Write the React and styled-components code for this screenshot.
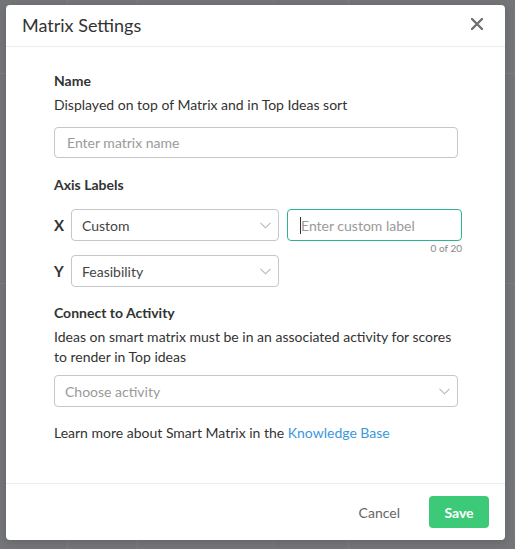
import React from "react";
import styled, { createGlobalStyle } from "styled-components";

const Global = createGlobalStyle`
  html, body { margin: 0; padding: 0; }
  body {
    background-color: #747579;
    background-image:
      linear-gradient(to right, transparent 67px, #7c7d81 67px, #7c7d81 68px, transparent 68px),
      linear-gradient(to right, transparent 137px, #7c7d81 137px, #7c7d81 138px, transparent 138px),
      linear-gradient(to right, transparent 278px, #6d7078 278px, #6d7078 279px, transparent 279px),
      linear-gradient(to right, transparent 348px, #7c7d81 348px, #7c7d81 349px, transparent 349px),
      linear-gradient(to bottom, transparent 73px, #7c7d81 73px, #7c7d81 74px, transparent 74px),
      linear-gradient(to bottom, transparent 283px, #7c7d81 283px, #7c7d81 284px, transparent 284px);
    font-family: Lato, "Noto Sans", sans-serif;
    color: #333;
  }
  * { box-sizing: border-box; }
`;

const Page = styled.div`
  width: 515px;
  height: 549px;
  padding: 5px 10px 9px 6px;
`;

const Modal = styled.div`
  width: 499px;
  height: 535px;
  background: #fff;
  border-radius: 4px;
  display: flex;
  flex-direction: column;
  box-shadow: 0 2px 8px rgba(0, 0, 0, 0.15);
`;

const Header = styled.div`
  height: 42px;
  display: flex;
  align-items: center;
  justify-content: space-between;
  padding: 0 20px 2px 16px;
  border-bottom: 1px solid #ececec;
`;

const Title = styled.h2`
  margin: 0;
  font-size: 18px;
  font-weight: 400;
  color: #333;
`;

const CloseButton = styled.button`
  border: none;
  background: none;
  padding: 0;
  width: 14px;
  height: 14px;
  display: flex;
  cursor: pointer;
`;

const Body = styled.div`
  flex: 1;
  padding: 24px 47px 0 48px;
  display: flex;
  flex-direction: column;
`;

const SectionTitle = styled.div`
  font-size: 14px;
  font-weight: 700;
  line-height: 20px;
  color: #333;
  margin-top: ${(p) => p.$top || 0}px;
`;

const Help = styled.p`
  margin: 4px 0 0;
  font-size: 14px;
  line-height: 20px;
  color: #333;
`;

const TextInput = styled.input`
  margin-top: 12px;
  width: 100%;
  height: 31px;
  border: 1px solid #c4c6c9;
  border-radius: 4px;
  padding: 0 12px;
  font-family: Lato, sans-serif;
  font-size: 14px;
  color: #333;
  outline: none;
  &::placeholder { color: #9a9a9a; }
`;

const AxisGrid = styled.div`
  margin-top: 14px;
  display: grid;
  grid-template-columns: 17px 208px 183px;
  grid-template-rows: 32px 14px 32px;
  column-gap: 0;
  align-items: center;
`;

const AxisLetter = styled.span`
  font-size: 15px;
  font-weight: 700;
  color: #333;
`;

const SelectBox = styled.div`
  position: relative;
  height: ${(p) => p.$h || 32}px;
  ${(p) => (p.$full ? "margin-top: 8px; width: 100%;" : "")}
  border: 1px solid #c4c6c9;
  border-radius: 4px;
  display: flex;
  align-items: center;
  justify-content: space-between;
  padding: 0 7px 0 10px;
  font-size: 14px;
  color: ${(p) => (p.$placeholder ? "#9a9a9a" : "#444")};
  background: #fff;
`;

const FocusField = styled.div`
  margin-left: 8px;
  height: 32px;
  border: 1px solid #2db394;
  border-radius: 4px;
  display: flex;
  align-items: center;
  padding: 0 12px;
`;

const Caret = styled.span`
  width: 1px;
  height: 17px;
  background: #333;
  flex: none;
`;

const BareInput = styled.input`
  border: none;
  outline: none;
  flex: 1;
  min-width: 0;
  padding: 0;
  font-family: Lato, sans-serif;
  font-size: 14px;
  color: #333;
  background: transparent;
  &::placeholder { color: #9a9a9a; }
`;

const Counter = styled.span`
  grid-column: 3;
  justify-self: end;
  font-size: 10px;
  line-height: 14px;
  color: #888;
`;

const Paragraph = styled.p`
  margin: 16px 0 0;
  font-size: 14px;
  line-height: 20px;
  color: #333;
`;

const Link = styled.a`
  color: #3a97dc;
  text-decoration: none;
`;

const Footer = styled.div`
  height: 57px;
  border-top: 1px solid #ececec;
  display: flex;
  align-items: center;
  justify-content: flex-end;
  padding: 0 16px 0 0;
  gap: 17px;
`;

const GhostButton = styled.button`
  border: none;
  background: none;
  font-family: Lato, sans-serif;
  font-size: 14px;
  color: #666;
  padding: 0 12px;
  height: 32px;
  cursor: pointer;
`;

const PrimaryButton = styled.button`
  border: none;
  background: #3cca79;
  color: #fff;
  font-family: Lato, sans-serif;
  font-weight: 700;
  font-size: 14px;
  width: 60px;
  height: 32px;
  border-radius: 4px;
  cursor: pointer;
`;

const Chevron = () => (
  <svg width="11" height="7" viewBox="0 0 11 7" fill="none">
    <path d="M0.5 0.8 L5.5 5.8 L10.5 0.8" stroke="#b5b7ba" strokeWidth="1.1" />
  </svg>
);

const Select = ({ children, placeholder, full, h }) => (
  <SelectBox $placeholder={placeholder} $full={full} $h={h}>
    <span>{children}</span>
    <Chevron />
  </SelectBox>
);

export default function App() {
  return (
    <>
      <Global />
      <Page>
        <Modal>
          <Header>
            <Title>Matrix Settings</Title>
            <CloseButton aria-label="Close">
              <svg width="12" height="12" viewBox="0 0 12 12">
                <path d="M1 1 L11 11 M11 1 L1 11" stroke="#6f6f6f" strokeWidth="2.4" strokeLinecap="round" />
              </svg>
            </CloseButton>
          </Header>
          <Body>
            <SectionTitle>Name</SectionTitle>
            <Help>Displayed on top of Matrix and in Top Ideas sort</Help>
            <TextInput placeholder="Enter matrix name" />
            <SectionTitle $top={17}>Axis Labels</SectionTitle>
            <AxisGrid>
              <AxisLetter>X</AxisLetter>
              <Select>Custom</Select>
              <FocusField>
                <Caret />
                <BareInput placeholder="Enter custom label" />
              </FocusField>
              <Counter>0 of 20</Counter>
              <AxisLetter>Y</AxisLetter>
              <Select>Feasibility</Select>
            </AxisGrid>
            <SectionTitle $top={16}>Connect to Activity</SectionTitle>
            <Help>Ideas on smart matrix must be in an associated activity for scores to render in Top ideas</Help>
            <Select placeholder full>Choose activity</Select>
            <Paragraph>
              Learn more about Smart Matrix in the <Link href="#">Knowledge Base</Link>
            </Paragraph>
          </Body>
          <Footer>
            <GhostButton>Cancel</GhostButton>
            <PrimaryButton>Save</PrimaryButton>
          </Footer>
        </Modal>
      </Page>
    </>
  );
}
